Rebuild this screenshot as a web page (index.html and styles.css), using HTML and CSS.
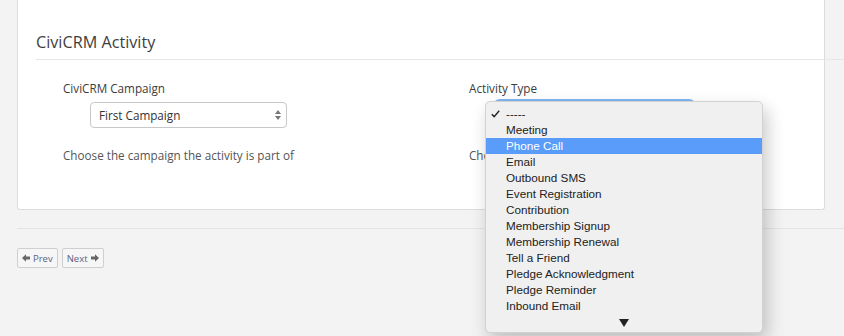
FILE: index.html
```html
<!DOCTYPE html>
<html lang="en">
<head>
  <meta charset="UTF-8">
  <title>CiviCRM Activity</title>
  <link rel="stylesheet" href="styles.css">
</head>
<body>
  <div class="panel">
    <h2 class="panel-title">CiviCRM Activity</h2>

    <div class="fields">
      <div class="field">
        <label class="field-label">CiviCRM Campaign</label>
        <div class="select">
          <span>First Campaign</span>
          <svg class="select-arrows" width="6" height="10" viewBox="0 0 6 10">
            <path d="M3 0 L6 4 L0 4 Z M0 6 L6 6 L3 10 Z" fill="#777"/>
          </svg>
        </div>
        <p class="help">Choose the campaign the activity is part of</p>
      </div>

      <div class="field">
        <label class="field-label">Activity Type</label>
        <div class="select focused"></div>
        <p class="help">Choose</p>

        <ul class="menu">
          <li class="checked">
            <svg class="check" width="9" height="8" viewBox="0 0 9 8">
              <path d="M0.8 4.2 L3.2 6.6 L8.2 0.8" fill="none" stroke="#222" stroke-width="1.4"/>
            </svg>
            -----
          </li>
          <li>Meeting</li>
          <li class="active">Phone Call</li>
          <li>Email</li>
          <li>Outbound SMS</li>
          <li>Event Registration</li>
          <li>Contribution</li>
          <li>Membership Signup</li>
          <li>Membership Renewal</li>
          <li>Tell a Friend</li>
          <li>Pledge Acknowledgment</li>
          <li>Pledge Reminder</li>
          <li>Inbound Email</li>
          <li class="scroll">
            <svg width="10" height="8" viewBox="0 0 10 8"><path d="M0 0 L10 0 L5 8 Z" fill="#222"/></svg>
          </li>
        </ul>
      </div>
    </div>
  </div>

  <div class="divider"></div>

  <div class="pager">
    <button class="btn">
      <svg width="8" height="8" viewBox="0 0 8 8"><path d="M0 4 L4 0.3 L4 2.6 L8 2.6 L8 5.4 L4 5.4 L4 7.7 Z" fill="#666"/></svg>
      Prev
    </button>
    <button class="btn">
      Next
      <svg width="8" height="8" viewBox="0 0 8 8"><path d="M8 4 L4 0.3 L4 2.6 L0 2.6 L0 5.4 L4 5.4 L4 7.7 Z" fill="#666"/></svg>
    </button>
  </div>
</body>
</html>
```

FILE: styles.css
```css
body {
  margin: 0;
  padding: 0;
  font-family: 'Open Sans', 'Liberation Sans', sans-serif;
  background: #f3f3f3;
  height: 336px;
  overflow: hidden;
}

.panel {
  margin-left: 17px;
  width: 770px;
  padding: 0 18px 45px 18px;
  background-color: white;
  border: 1px solid #dcdcdc;
  border-top: none;
  border-radius: 0 0 3px 3px;
}

.panel-title {
  margin: 0 -40px 0 0;
  padding: 30px 0 5px 0;
  font-size: 16.2px;
  line-height: 24px;
  font-weight: normal;
  color: #3e3e3e;
  border-bottom: 1px solid #e6e6e6;
}

.fields {
  display: grid;
  grid-template-columns: 406px 1fr;
  margin-top: 19px;
  padding-left: 27px;
}

.field {
  position: relative;
}

.field-label {
  display: block;
  font-size: 11.7px;
  line-height: 18px;
  color: #3c3c3c;
}

.select {
  display: flex;
  align-items: center;
  justify-content: space-between;
  box-sizing: border-box;
  width: 197px;
  height: 26px;
  margin: 5px 0 0 27px;
  padding: 0 5px 0 8px;
  border: 1px solid #c8c8c8;
  border-radius: 4px;
  font-size: 11.7px;
  color: #333;
}

.select.focused {
  border-color: #66afe9;
  box-shadow: 0 0 0 3px #7fb6f4;
}

.help {
  margin: 18px 0 0 0;
  font-size: 11.7px;
  line-height: 18px;
  color: #555;
}

.menu {
  position: absolute;
  left: 16px;
  top: 22px;
  width: 278px;
  height: 232px;
  box-sizing: border-box;
  margin: 0;
  padding: 4px 0 0 0;
  list-style: none;
  background: #f0f0f0;
  border: 1px solid #d2d2d2;
  border-radius: 5px;
  box-shadow: 4px 8px 18px rgba(0, 0, 0, 0.22);
  font-family: 'Liberation Sans', Arial, sans-serif;
  font-size: 11.7px;
  color: #222;
}

.menu li {
  position: relative;
  height: 16px;
  line-height: 16px;
  padding-left: 20px;
}

.menu li.active {
  background: #5a9cfa;
  color: white;
}

.menu .check {
  position: absolute;
  left: 5px;
  top: 4px;
}

.menu li.scroll {
  display: flex;
  justify-content: center;
  height: auto;
  padding: 5px 0 0 0;
}

.divider {
  margin: 18px 0 0 17px;
  border-top: 1px solid #e4e4e4;
}

.pager {
  display: flex;
  gap: 4px;
  margin: 19px 0 0 17px;
}

.btn {
  display: flex;
  align-items: center;
  gap: 3px;
  height: 20px;
  padding: 0 4px;
  font-family: 'Open Sans', 'Liberation Sans', sans-serif;
  font-size: 9.5px;
  color: #5a6382;
  background: #f6f6f6;
  border: 1px solid #cfcfcf;
  border-radius: 2px;
}
```
